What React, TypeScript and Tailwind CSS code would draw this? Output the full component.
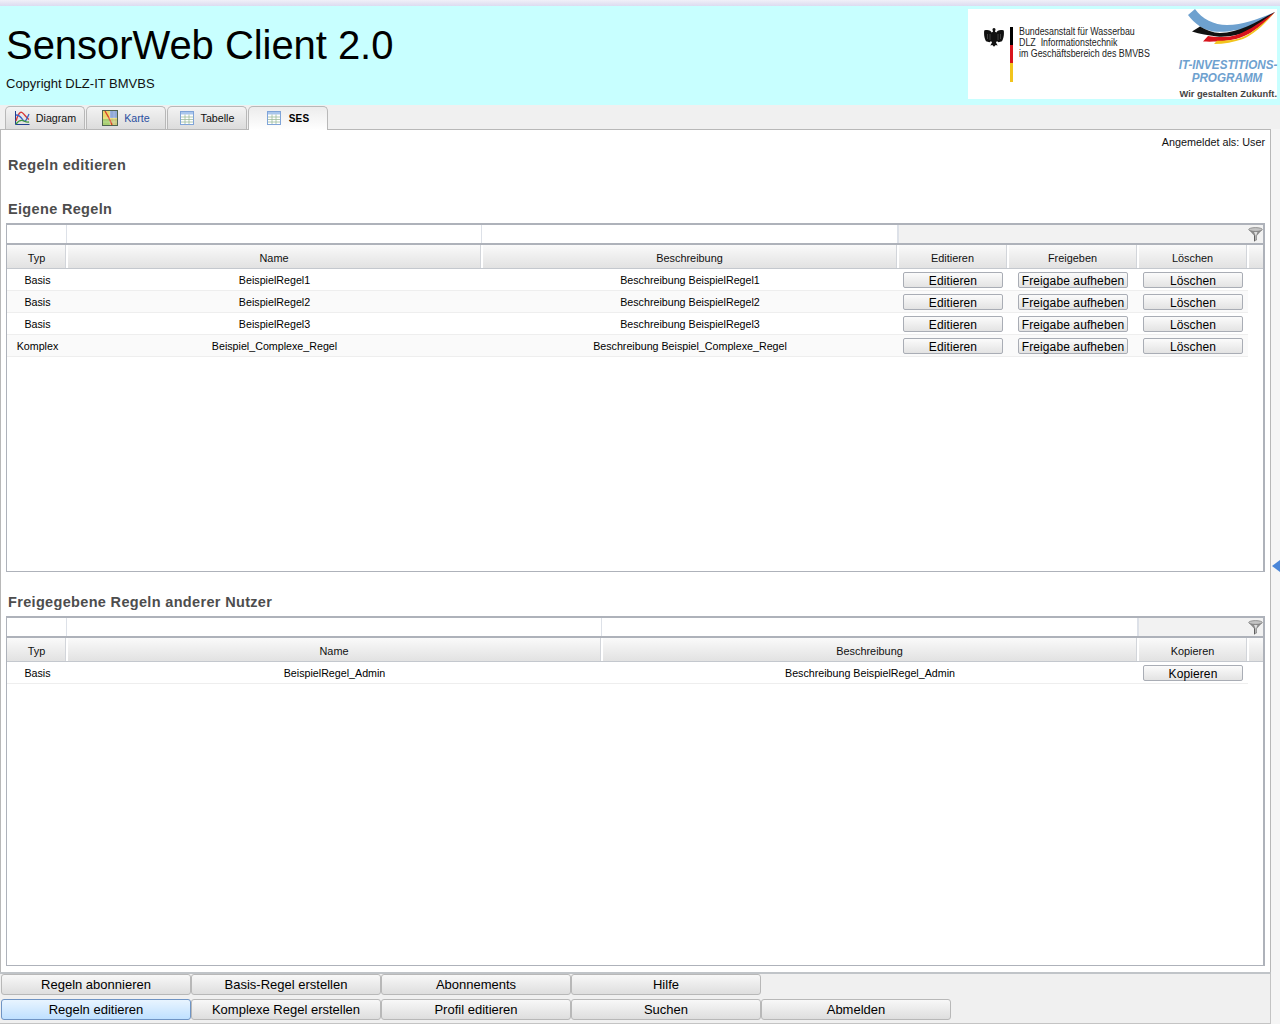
import { ReactNode } from "react";

const SANS = "font-['Liberation_Sans',Arial,sans-serif]";

const eigene = [
  { typ: "Basis", name: "BeispielRegel1", desc: "Beschreibung BeispielRegel1" },
  { typ: "Basis", name: "BeispielRegel2", desc: "Beschreibung BeispielRegel2" },
  { typ: "Basis", name: "BeispielRegel3", desc: "Beschreibung BeispielRegel3" },
  { typ: "Komplex", name: "Beispiel_Complexe_Regel", desc: "Beschreibung Beispiel_Complexe_Regel" },
];

const DiagramIcon = () => (
  <svg width="16" height="16" viewBox="0 0 16 16" fill="none">
    <path d="M1.5 1v13.500H15.500" stroke="#1f3f8f" strokeWidth="1" />
    <path d="M2 11C4 4 6 1.500 8 2.500s4 5 7 7" stroke="#d83a3a" strokeWidth="1.300" />
    <path d="M2 5c3 0 5 2 7 5s3 1 6-6" stroke="#3a62c8" strokeWidth="1.300" />
    <path d="M2 14c3-4 6-4 8-3s3 1.500 5 1" stroke="#3f9a3f" strokeWidth="1.300" />
  </svg>
);

const MapIcon = () => (
  <svg width="16" height="16" viewBox="0 0 16 16">
    <rect x="0.500" y="0.500" width="15" height="15" fill="#e8d76a" stroke="#4d6350" />
    <rect x="8" y="1" width="7" height="7" fill="#8fa8d8" />
    <rect x="1" y="9" width="7" height="6" fill="#a8cf70" />
    <rect x="9" y="9" width="6" height="6" fill="#c8c878" />
    <path d="M3 1l4 7 3 7" stroke="#d8402a" strokeWidth="1.400" fill="none" />
    <path d="M8 1v14M1 8h14M12 1v14M1 12h14" stroke="#ffffff" strokeOpacity="0.350" strokeWidth="0.700" />
  </svg>
);

const TableIcon = () => (
  <svg width="14" height="14" viewBox="0 0 14 14">
    <rect x="0.500" y="0.500" width="13" height="13" fill="#ffffff" stroke="#7fa4d8" />
    <rect x="1" y="1" width="12" height="2.500" fill="#a9c6ec" />
    <path d="M1 6h12M1 8.500h12M1 11h12M5 3.500V13M9 3.500V13" stroke="#9dbb9d" strokeWidth="0.800" />
  </svg>
);

const FunnelIcon = () => (
  <svg width="15" height="15" viewBox="0 0 15 15">
    <path d="M1 3l5 5.500V14.500l3-1.500V8.500L14 3z" fill="#8c8c8c" />
    <path d="M6 5l1.500 3.500v4.500l.7-.4V8.500L9.500 5z" fill="#dedede" />
    <ellipse cx="7.500" cy="2.500" rx="6.800" ry="1.900" fill="#c4c4c4" stroke="#777777" strokeWidth="0.700" />
    <path d="M6 8.500v6l.8-.4V8.500z" fill="#555555" />
  </svg>
);

const Eagle = () => (
  <svg width="20" height="20" viewBox="0 0 20 20">
    <path
      d="M8.700 3.200a1.500 1.500 0 1 1 2.600 0l-.3 2 1 .7C13 3.500 16 2.400 19.800 3.500c.4 3.500 0 7.500-1.800 10.800l-3.500 1-1.700-1.300-.8 1.500 1.700 3-2-.6L10 19.700l-1.700-1.800-2 .6 1.700-3-.8-1.500-1.700 1.300-3.500-1C.2 11 -.2 7 .2 3.500 4 2.400 7 3.500 8 5.900l1-.7z"
      fill="#111111"
    />
    <ellipse cx="10" cy="10" rx="4" ry="5.500" fill="#111111" />
    <path d="M3.500 7v5M6 7v6M14 7v6M16.500 7v5" stroke="#ffffff" strokeOpacity="0.500" strokeWidth="0.400" />
  </svg>
);

const Swoosh = () => (
  <svg width="92" height="38" viewBox="0 0 92 38" className="absolute left-[218px] top-0">
    <path d="M2 6L9 0C16 10 28 16 41 16 58 16 74 9 89 3 76 13 62 20 50 21 42 23 34 23 27 22.500 22 21 18 20 14 17.500 9 14 5 10 2 6z" fill="#6ea1cf" />
    <path d="M6 22.500L14 17.500C20 21 27 24 34 24 54 24 72 12 89 3 74 16 62 24 50 26 43 27.500 37 28 31 27.500 22 26 14 25 6 22.500z" fill="#111111" />
    <path d="M17 32.500L22 27C30 28.500 38 28 44 27.500 60 25 76 12 89 3 76 17 64 26 50 30 42 32 30 33 17 32.500z" fill="#d8141c" />
    <path d="M28 35L31 31.800C40 32 50 31 57 28 68 23 80 12 89 3 78 16 68 25 57 30 48 33 38 35 28 35z" fill="#f2c41c" />
  </svg>
);

// small button used in the table rows
const CellButton = ({ children }: { children: ReactNode }) => (
  <button className="w-full h-[16px] flex items-center justify-center rounded-[2px] border border-[#a9adb5] bg-gradient-to-b from-[#fbfbfb] to-[#e3e3e3] text-[12px] leading-none tracking-[0.1px] text-black pt-[1px]">
    {children}
  </button>
);

const FilterRow = ({ cols, cells }: { cols: string; cells: number }) => (
  <div className={`grid ${cols} h-[20px] border-b-2 border-[#aeb2ba] bg-[#f2f2f2]`}>
    {Array.from({ length: cells }).map((_, i) => (
      <div key={i} className="bg-white border-r-2 -mr-[1px] border-[#dde1e8]" />
    ))}
  </div>
);

const HeadCell = ({ children }: { children?: ReactNode }) => (
  <div
    className={`flex items-center justify-center pt-[4px] min-w-0 ${
      children ? "border-r-2 -mr-[1px] border-white shadow-[inset_-1px_0_0_#d2d5da]" : ""
    }`}
  >
    {children}
  </div>
);

const Rule = ({ typ, name, desc, cols, actions }: { typ: string; name: string; desc: string; cols: string; actions: string[] }) => (
  <div className={`grid ${cols} h-[22px] items-center border-b border-[#eeeeee] even:bg-[#fafafa] text-[10.700px] text-black`}>
    <div className="text-center pl-[1px] pt-[2px]">{typ}</div>
    <div className="text-center pt-[2px]">{name}</div>
    <div className="text-center pt-[2px]">{desc}</div>
    {actions.map((a) => (
      <div key={a} className={`${a.length > 10 ? "px-[10px]" : "px-[5px]"} pt-[1px]`}>
        <CellButton>{a}</CellButton>
      </div>
    ))}
  </div>
);

const RuleTable = ({ cols, heads, rows, actions, height }: {
  cols: string;
  heads: string[];
  rows: { typ: string; name: string; desc: string }[];
  actions: string[];
  height: string;
}) => (
  <div className={`${height} ml-[5px] mr-[5px] border border-[#aeb2ba] border-t-2 border-r-2 relative`}>
    <FilterRow cols={cols} cells={3} />
    <div className="absolute right-0 top-[2px]">
      <FunnelIcon />
    </div>
    <div className={`grid ${cols} h-[24px] border-b border-[#c4c8ce] bg-gradient-to-b from-[#fafafa] to-[#e2e2e2] text-[10.900px] text-[#111111]`}>
      {heads.map((h) => (
        <HeadCell key={h}>{h}</HeadCell>
      ))}
    </div>
    <div className="w-[1241px]">
      {rows.map((r) => (
        <Rule key={r.name} {...r} cols={cols} actions={actions} />
      ))}
    </div>
  </div>
);

const Tab = ({ icon, label, active, blue, gap }: { icon: ReactNode; label: string; active?: boolean; blue?: boolean; gap: string }) => (
  <div
    className={`w-[80px] flex items-center justify-center ${gap} rounded-t-[5px] border border-b-0 border-[#b8b8b8] ${
      active
        ? "h-[24px] pb-[1px] bg-gradient-to-b from-[#ececec] to-white font-bold text-[10px] tracking-[0.2px] relative z-10 text-black"
        : "h-[23px] bg-gradient-to-b from-[#f3f3f3] to-[#dcdcdc] text-[10.700px]"
    } ${blue ? "text-[#2a4fa0]" : "text-[#111111]"}`}
  >
    {icon}
    <span>{label}</span>
  </div>
);

const NavButton = ({ children, active }: { children: ReactNode; active?: boolean }) => (
  <button
    className={`w-[190px] h-[21px] flex items-center justify-center rounded-[3px] border text-[13px] text-black ${
      active
        ? "border-[#6f94c4] bg-gradient-to-b from-[#e8f4ff] to-[#bfe0ff]"
        : "border-[#b8b8b8] bg-gradient-to-b from-[#f8f8f8] to-[#dedede]"
    }`}
  >
    {children}
  </button>
);

export default function App() {
  return (
    <div className={`${SANS} w-[1280px] h-[1024px] flex flex-col overflow-hidden bg-[#f5f5f5]`}>
      <div className="h-[6px] bg-gradient-to-b from-[#f0f0f8] to-[#dcdcf0]" />

      <header className="h-[99px] bg-[#c8ffff] flex justify-between pr-[3px] pt-[3px]">
        <div className="pl-[6px]">
          <h1 className="text-[40px] leading-[46px] mt-[13px] tracking-[-0.05px] text-black">SensorWeb Client 2.0</h1>
          <p className="text-[13px] leading-[15px] mt-[8px] text-[#111111]">Copyright DLZ-IT BMVBS</p>
        </div>

        <div className="relative w-[309px] h-[90px] bg-white flex">
          <div className="w-[20px] ml-[16px] mt-[18px]">
            <Eagle />
          </div>
          <div className="w-[3px] h-[55px] mt-[18px] ml-[6px] flex flex-col">
            <div className="h-[18px] bg-black" />
            <div className="h-[18px] bg-[#d8141c]" />
            <div className="h-[19px] bg-[#f2c41c]" />
          </div>
          <div className="ml-[6px] mt-[17px] text-[10px] leading-[11px] text-[#222222] whitespace-nowrap origin-top-left scale-x-[0.885]">
            <div>Bundesanstalt für Wasserbau</div>
            <div>DLZ&nbsp; Informationstechnik</div>
            <div>im Geschäftsbereich des BMVBS</div>
          </div>
          <Swoosh />
          <div className="absolute right-0 top-[49px] w-[100px] text-center font-bold italic text-[#6ea1cf] text-[13.500px] leading-[13px]">
            <div className="scale-x-[0.865] -translate-x-[5px] whitespace-nowrap">IT-INVESTITIONS-</div>
            <div className="scale-x-[0.865] whitespace-nowrap">PROGRAMM</div>
          </div>
          <div className="absolute right-0 top-[79px] text-[9.300px] leading-[12px] font-bold text-[#444444] whitespace-nowrap">
            Wir gestalten Zukunft.
          </div>
        </div>
      </header>

      <nav className="h-[24px] flex items-start gap-[1px] pl-[5px] pt-[1px] bg-[#f0f0f0]">
        <Tab icon={<DiagramIcon />} label="Diagram" gap="gap-[6px]" />
        <Tab icon={<MapIcon />} label="Karte" blue gap="gap-[6px]" />
        <Tab icon={<TableIcon />} label="Tabelle" gap="gap-[7px]" />
        <Tab icon={<TableIcon />} label="SES" active gap="gap-[8px]" />
      </nav>

      <div className="flex-1 flex min-h-0">
        <div className="w-[1271px] flex flex-col">
          <main className="flex-1 bg-white border border-b-0 border-[#b8b8b8] flex flex-col">
            <div className="text-right pr-[5px] pt-[6px] text-[10.800px] leading-[13px] text-[#111111]">Angemeldet als: User</div>
            <h2 className="ml-[7px] mt-[8px] text-[14.500px] leading-[17px] font-bold tracking-[0.33px] text-[#4d4d4d]">Regeln editieren</h2>
            <h2 className="ml-[7px] mt-[27px] mb-[5px] text-[14.500px] leading-[17px] font-bold tracking-[0.33px] text-[#4d4d4d]">Eigene Regeln</h2>
            <RuleTable
              height="h-[349px]"
              cols="grid-cols-[60px_415px_416px_110px_130px_110px_16px]"
              heads={["Typ", "Name", "Beschreibung", "Editieren", "Freigeben", "Löschen", ""]}
              rows={eigene}
              actions={["Editieren", "Freigabe aufheben", "Löschen"]}
            />
            <h2 className="ml-[7px] mt-[22px] mb-[5px] text-[14.500px] leading-[17px] font-bold tracking-[0.33px] text-[#4d4d4d]">Freigegebene Regeln anderer Nutzer</h2>
            <RuleTable
              height="h-[350px]"
              cols="grid-cols-[60px_535px_536px_110px_16px]"
              heads={["Typ", "Name", "Beschreibung", "Kopieren", ""]}
              rows={[{ typ: "Basis", name: "BeispielRegel_Admin", desc: "Beschreibung BeispielRegel_Admin" }]}
              actions={["Kopieren"]}
            />
          </main>

          <footer className="h-[52px] bg-[#f0f0f0] border-t-2 border-t-[#c0c4c8] border-r border-b border-[#c4c4c4] pl-[1px] flex flex-col gap-[4px]">
            <div className="flex">
              <NavButton>Regeln abonnieren</NavButton>
              <NavButton>Basis-Regel erstellen</NavButton>
              <NavButton>Abonnements</NavButton>
              <NavButton>Hilfe</NavButton>
            </div>
            <div className="flex">
              <NavButton active>Regeln editieren</NavButton>
              <NavButton>Komplexe Regel erstellen</NavButton>
              <NavButton>Profil editieren</NavButton>
              <NavButton>Suchen</NavButton>
              <NavButton>Abmelden</NavButton>
            </div>
          </footer>
        </div>
        <aside className="flex-1 flex justify-end pt-[431px]">
          <div className="w-0 h-0 border-y-[6px] border-y-transparent border-r-[8px] border-r-[#4a86d8]" />
        </aside>
      </div>
    </div>
  );
}
